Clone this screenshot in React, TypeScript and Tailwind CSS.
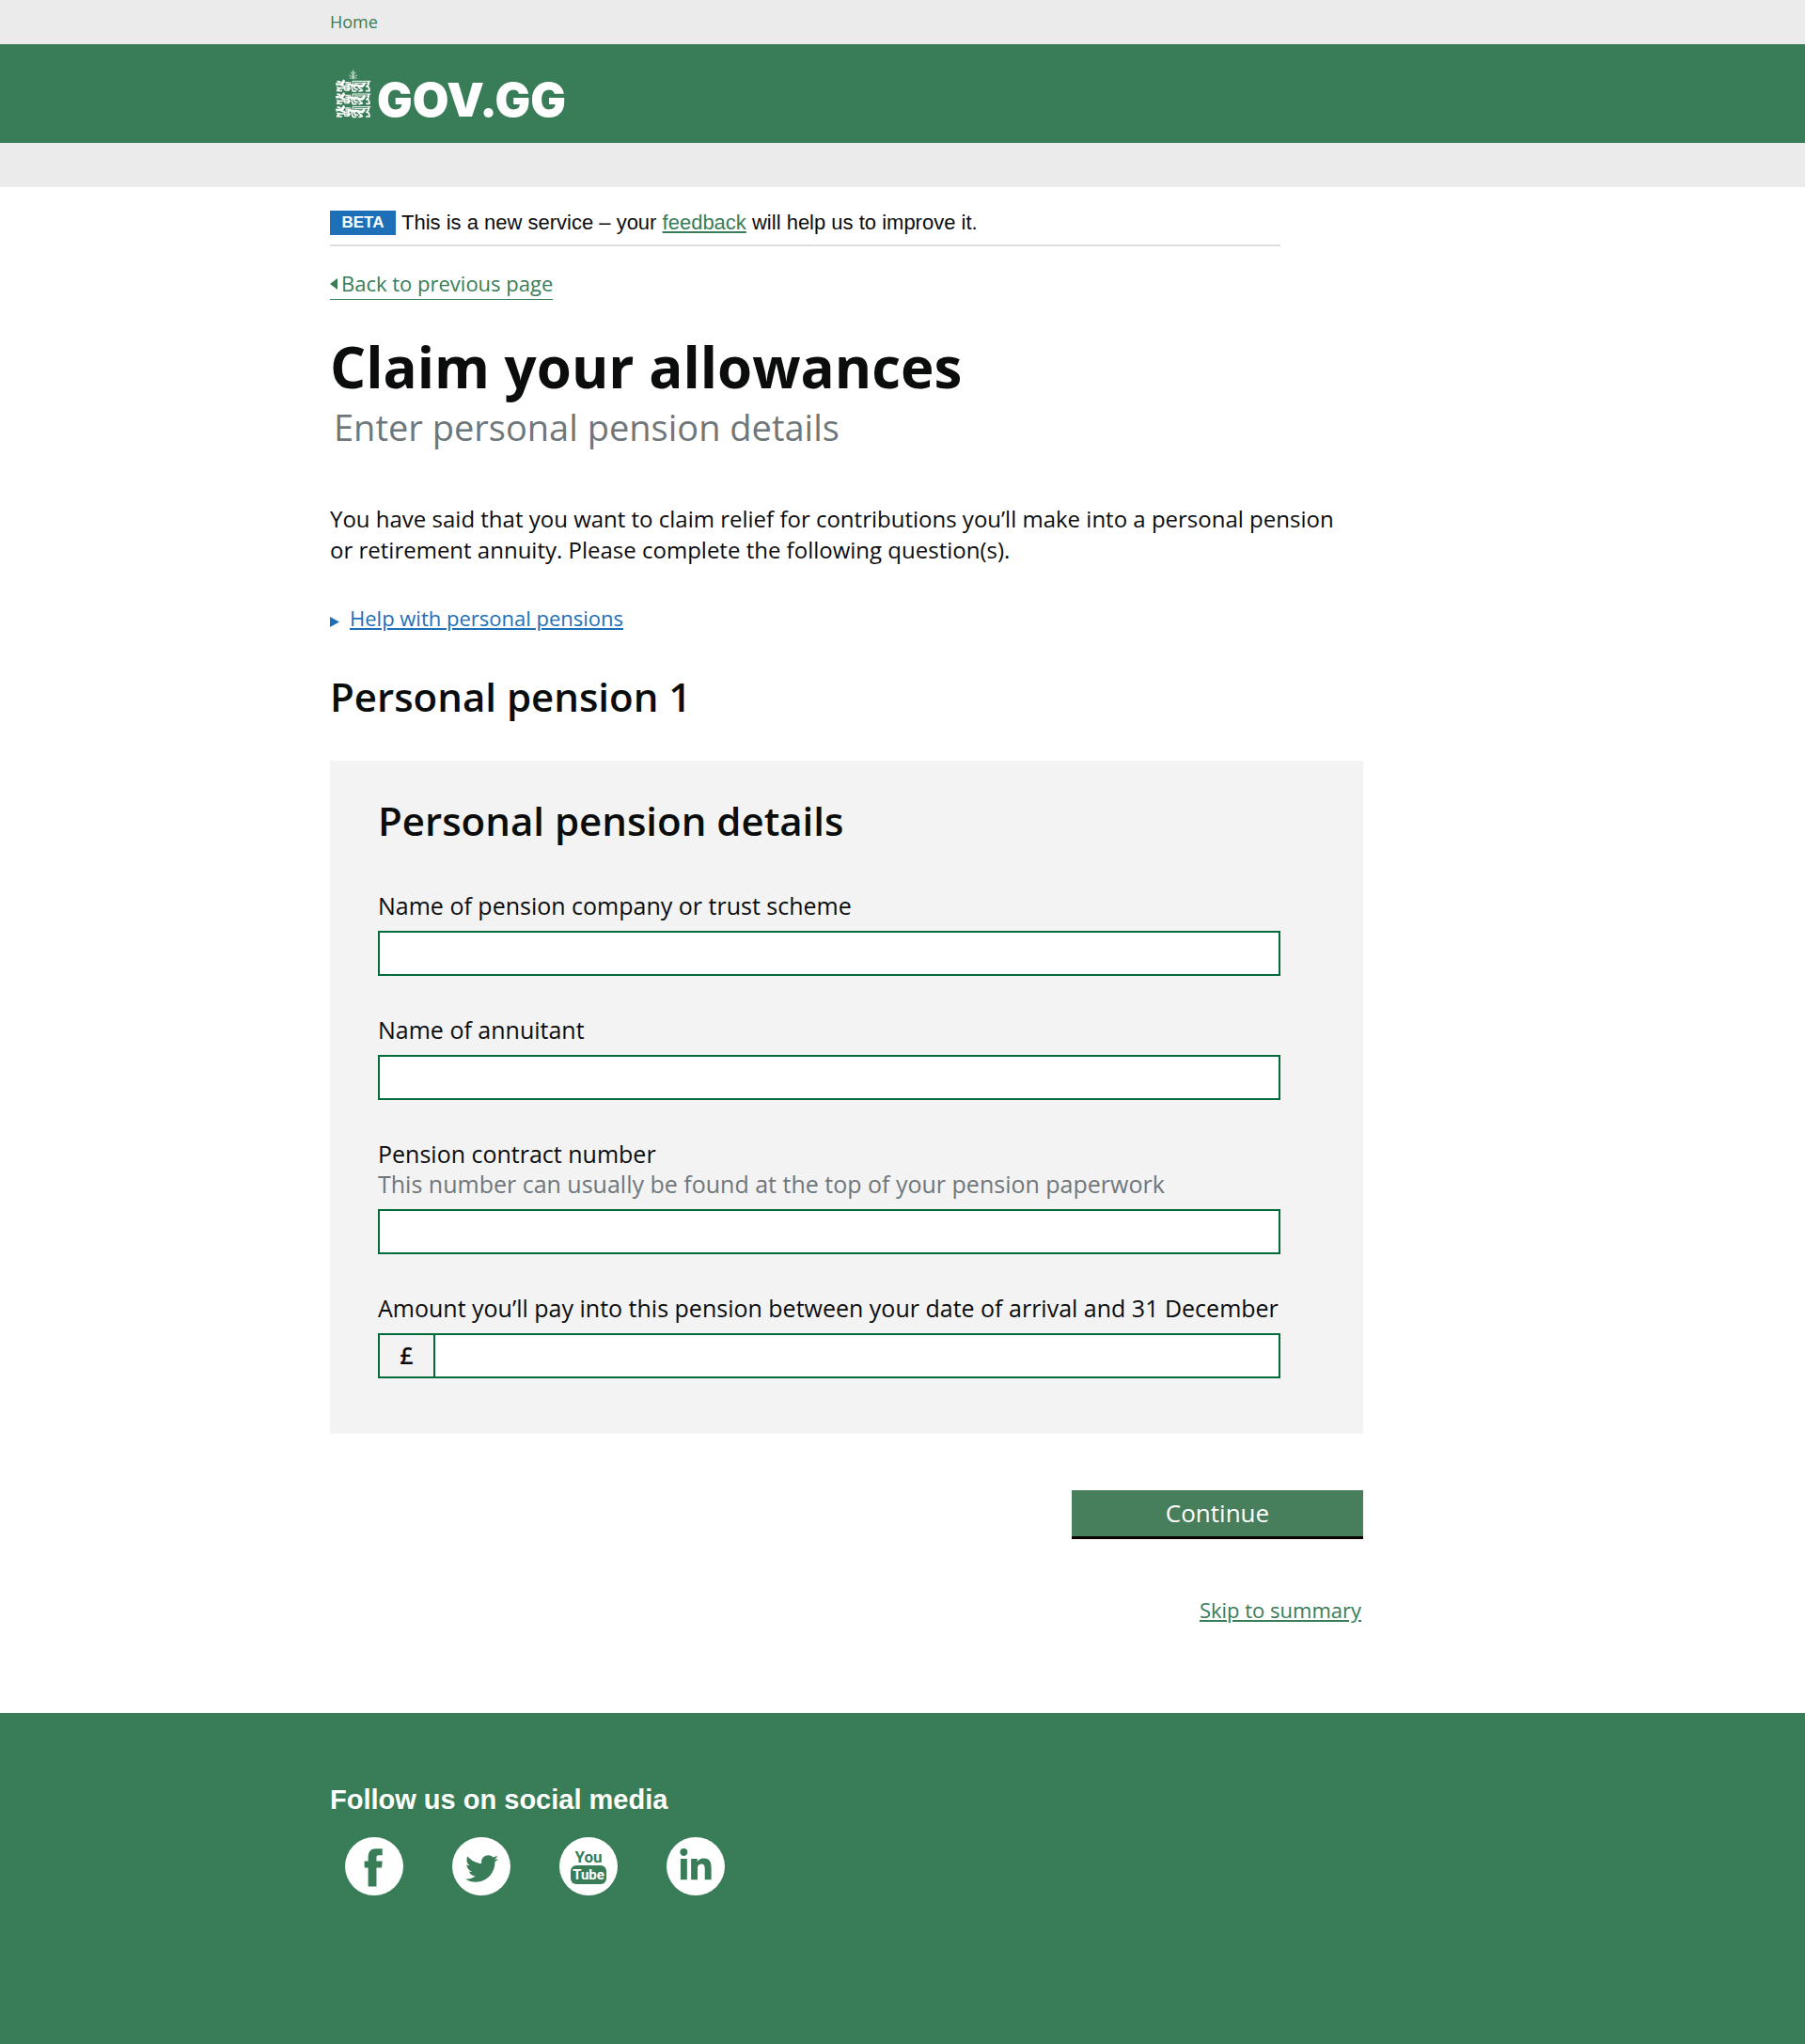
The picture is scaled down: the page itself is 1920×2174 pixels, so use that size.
import type { ReactNode } from "react";
import { FaLinkedinIn, FaTwitter } from "react-icons/fa";

function Container({ children, className = "" }: { children?: ReactNode; className?: string }) {
  return <div className={`mx-auto w-full max-w-[1250px] px-4 ${className}`}>{children}</div>;
}

function Lion({ y }: { y: number }) {
  return (
    <g transform={`translate(0 ${y})`} fill="none" stroke="#fff" strokeLinecap="round" strokeLinejoin="round">
      {/* forelegs and paws */}
      <path d="M26 1 16 14M27 5 19 16M14 6l-7-2M13 13 2 12M20 16l12 5" strokeWidth="6" />
      <path d="M30 25H12l-6-2M14 25l-9 8 14 1" strokeWidth="5" />
      <path d="M8 3l5 7M1 10l8 4M2 18l6-3M7 23l-3 11" strokeWidth="2" />
      {/* head and mane */}
      <path d="M31 5h17v10l-5 4 5 6-5 9H29l-3-7 5-8z" fill="#fff" stroke="none" />
      <path d="M31 10h7M31 16h6M31 23h7M31 29h5M43 6v4" stroke="#387d57" strokeWidth="2" />
      {/* tail */}
      <path d="M54 11V3h57M60 9h44" strokeWidth="3" />
      {/* body */}
      <path d="M49 15c8 4 14-1 23 2 8 3 16 2 19-5" strokeWidth="8" />
      {/* hind legs */}
      <path d="M52 16c1 7-2 10 3 18M60 20c-2 7 4 9 10 9M55 35h10M72 18c2 9 8 8 13 15l-10 2" strokeWidth="5" />
      <path d="M106 5c0 8-2 13-8 15M100 18c6 3 8 8 8 16H98" strokeWidth="5" />
      <path d="M91 8c0 8-2 12-6 15" strokeWidth="3" />
    </g>
  );
}

function Crest() {
  return (
    <svg viewBox="0 0 114 156" className="h-[52px] w-[38px]" aria-hidden="true">
      <path
        d="M56 2v28M56 19l-8-10M56 19l8-10M56 24l-12-6M56 24l12-6M45 27h22M53 8l3 4 3-4"
        fill="none"
        stroke="#fff"
        strokeWidth="2"
        strokeLinecap="round"
      />
      <Lion y={34} />
      <Lion y={75} />
      <Lion y={116} />
    </svg>
  );
}

function TextField({ id, label, hint, prefix }: { id: string; label: string; hint?: string; prefix?: string }) {
  return (
    <div>
      <label htmlFor={id} className="block text-[25px] leading-8">
        {label}
      </label>
      {hint && (
        <p id={`${id}-hint`} className="text-[25px] leading-8 text-[#6f777b]">
          {hint}
        </p>
      )}
      <div className="mt-[11px] flex h-12 border-2 border-[#006a3a] bg-white">
        {prefix && (
          <span className="flex w-[59px] items-center justify-center border-r-2 border-[#006a3a] bg-[#f3f3f3] text-[25px] font-semibold">
            {prefix}
          </span>
        )}
        <input
          id={id}
          type="text"
          aria-describedby={hint ? `${id}-hint` : undefined}
          className="min-w-0 flex-1 bg-transparent px-3 text-[22px] outline-none"
        />
      </div>
    </div>
  );
}

const roundLink = "flex size-[62px] items-center justify-center rounded-full bg-white text-[#387d57]";

export default function App() {
  return (
    <div className="flex min-h-screen flex-col bg-white font-['Open_Sans',sans-serif] text-[#0b0c0c]">
      <nav className="bg-[#ebebeb]" aria-label="Breadcrumb">
        <Container>
          <a href="#home" className="block w-fit text-[18px] leading-[47px] text-[#387d57]">
            Home
          </a>
        </Container>
      </nav>
      <header className="bg-[#387d57]">
        <Container className="flex h-[105px] items-center">
          <a href="#gov" className="flex items-end gap-1.5 pl-1.5 text-white">
            <Crest />
            <span className="font-['Inter',sans-serif] text-[50px] leading-10 font-black">GOV.GG</span>
          </a>
        </Container>
      </header>
      <div className="h-[47px] bg-[#ebebeb]" />

      <main>
        <Container className="pt-[25px] pb-[95px]">
          <div className="max-w-[1099px]">
            <div className="flex max-w-[1011px] items-center gap-1.5 border-b-2 border-[#dedede] pb-2.5 font-['Liberation_Sans',sans-serif]">
              <strong className="w-[70px] bg-[#1d70b8] text-center text-[17px] leading-[26px] text-white">BETA</strong>
              <p className="text-[22px] leading-[26px]">
                This is a new service – your{" "}
                <a href="#feedback" className="text-[#387d57] underline">
                  feedback
                </a>{" "}
                will help us to improve it.
              </p>
            </div>

            <a
              href="#back"
              className="mt-[23px] flex w-fit items-center gap-1 border-b border-[#387d57] pb-px text-[22px] leading-8 text-[#387d57]"
            >
              <svg viewBox="0 0 8 12" className="mt-0.5 h-3 w-2" aria-hidden="true">
                <path d="M8 0v12L0 6z" fill="currentColor" />
              </svg>
              Back to previous page
            </a>

            <h1 className="mt-[35px] text-[60px] leading-[72px] font-bold">Claim your allowances</h1>
            <p className="mt-1 pl-1 text-[38px] leading-[48px] text-[#6f777b]">Enter personal pension details</p>

            <p className="mt-[57px] max-w-[1085px] text-[24px] leading-[33px]">
              You have said that you want to claim relief for contributions you’ll make into a personal pension or
              retirement annuity. Please complete the following question(s).
            </p>

            <a href="#help" className="mt-[41px] flex w-fit items-center gap-[11px] text-[22px] leading-[30px] text-[#1d70b8]">
              <svg viewBox="0 0 10 11" className="mt-2 h-[11px] w-2.5" aria-hidden="true">
                <path d="M0 0l10 5.5L0 11z" fill="currentColor" />
              </svg>
              <span className="underline">Help with personal pensions</span>
            </a>

            <h2 className="mt-[43px] text-[42px] leading-[52px] font-semibold">Personal pension 1</h2>

            <form onSubmit={(e) => e.preventDefault()}>
              <section className="mt-[42px] bg-[#f3f3f3] pt-[38px] pr-[88px] pb-[59px] pl-[51px]">
                <h3 className="text-[42px] leading-[52px] font-semibold">Personal pension details</h3>
                <div className="mt-12 flex flex-col gap-[41px]">
                  <TextField id="company" label="Name of pension company or trust scheme" />
                  <TextField id="annuitant" label="Name of annuitant" />
                  <TextField
                    id="contract"
                    label="Pension contract number"
                    hint="This number can usually be found at the top of your pension paperwork"
                  />
                  <TextField
                    id="amount"
                    label="Amount you’ll pay into this pension between your date of arrival and 31 December"
                    prefix="£"
                  />
                </div>
              </section>

              <div className="mt-[60px] flex flex-col items-end gap-[60px]">
                <button
                  type="submit"
                  className="h-[52px] w-[310px] border-b-3 border-[#0b0000] bg-[#477e5b] pb-0.5 text-[26px] leading-8 text-white"
                >
                  Continue
                </button>
                <a href="#summary" className="pr-0.5 text-[22px] leading-[30px] text-[#387d57] underline">
                  Skip to summary
                </a>
              </div>
            </form>
          </div>
        </Container>
      </main>

      <footer className="flex-1 bg-[#387d57] text-white">
        <Container className="pt-[74px] pb-[158px]">
          <h2 className="font-['Liberation_Sans',sans-serif] text-[29px] leading-9 font-bold">Follow us on social media</h2>
          <div className="mt-[22px] flex gap-[52px] pl-4">
            <a href="#facebook" aria-label="Facebook" className={roundLink}>
              <svg viewBox="0 0 189 189" className="size-[62px]" aria-hidden="true">
                <path
                  d="M121 37v22h-12c-5 0-7 2-7 7v12h19l-2 21h-17v61H75V99H63V78h12V66c0-19 8-29 25-29z"
                  fill="currentColor"
                />
              </svg>
            </a>
            <a href="#twitter" aria-label="Twitter" className={roundLink}>
              <FaTwitter className="mt-1 size-[35px]" />
            </a>
            <a
              href="#youtube"
              aria-label="YouTube"
              className={`${roundLink} flex-col font-['Roboto',sans-serif] font-bold`}
            >
              <span className="text-[17px] leading-[18px]">You</span>
              <span className="w-[38px] rounded-md bg-[#387d57] text-center text-[15px] leading-5 text-white">Tube</span>
            </a>
            <a href="#linkedin" aria-label="LinkedIn" className={roundLink}>
              <FaLinkedinIn className="size-[38px]" />
            </a>
          </div>
        </Container>
      </footer>
    </div>
  );
}
